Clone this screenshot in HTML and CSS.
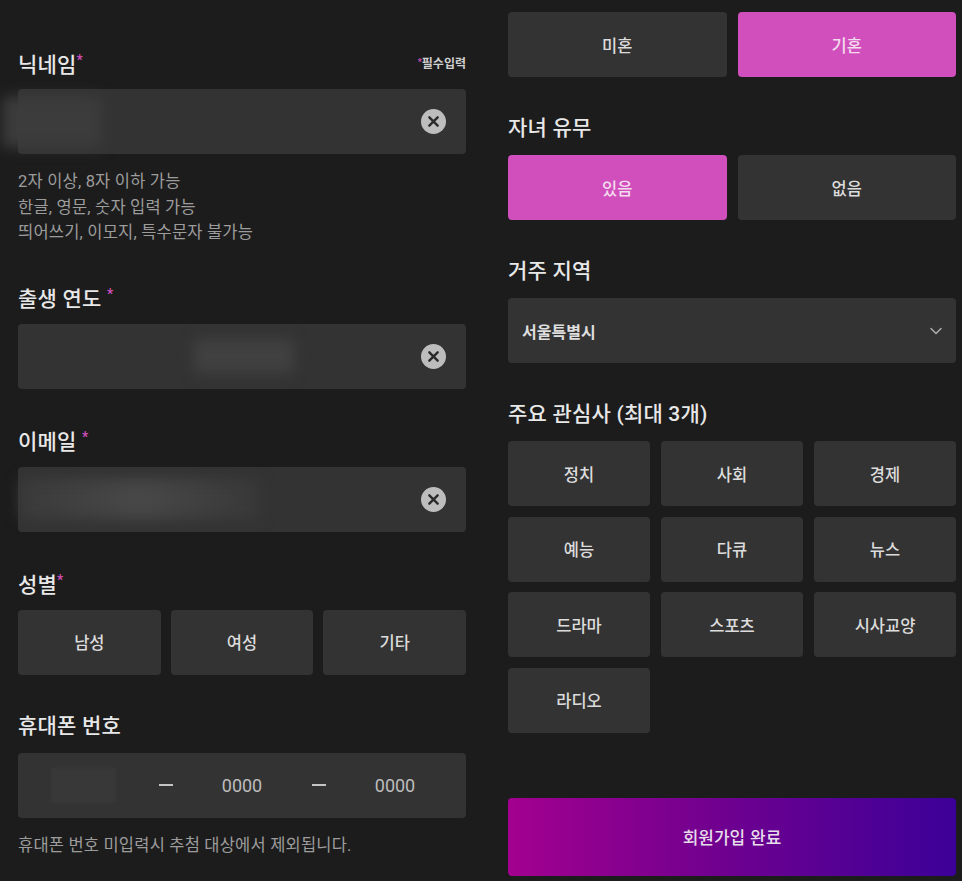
FILE: index.html
```html
<!DOCTYPE html>
<html lang="ko">
<head>
    <meta charset="UTF-8" />
    <meta name="viewport" content="width=device-width, initial-scale=1" />
    <title>회원가입</title>
    <link rel="stylesheet" href="styles.css">
</head>
<body>
    <div class="page">
        <div class="col col-left">
            <div class="field">
                <div class="label-row">
                    <span class="label">닉네임<span class="req">*</span></span>
                    <span class="note"><span class="req">*</span>필수입력</span>
                </div>
                <div class="input">
                    <span class="blur blur-nick"></span>
                    <span class="clear">
                        <svg width="25" height="25" viewBox="0 0 24 24"><circle cx="12" cy="12" r="12" fill="#bdbdbd"/><path d="M8 8 L16 16 M16 8 L8 16" stroke="#2b2b2b" stroke-width="2.3" stroke-linecap="round"/></svg>
                    </span>
                </div>
                <div class="hints">
                    <div>2자 이상, 8자 이하 가능</div>
                    <div>한글, 영문, 숫자 입력 가능</div>
                    <div>띄어쓰기, 이모지, 특수문자 불가능</div>
                </div>
            </div>

            <div class="field">
                <div class="label-row">
                    <span class="label">출생 연도 <span class="req">*</span></span>
                </div>
                <div class="input">
                    <span class="blur blur-year"></span>
                    <span class="clear">
                        <svg width="25" height="25" viewBox="0 0 24 24"><circle cx="12" cy="12" r="12" fill="#bdbdbd"/><path d="M8 8 L16 16 M16 8 L8 16" stroke="#2b2b2b" stroke-width="2.3" stroke-linecap="round"/></svg>
                    </span>
                </div>
            </div>

            <div class="field">
                <div class="label-row">
                    <span class="label">이메일 <span class="req">*</span></span>
                </div>
                <div class="input">
                    <span class="blur blur-mail"></span>
                    <span class="clear">
                        <svg width="25" height="25" viewBox="0 0 24 24"><circle cx="12" cy="12" r="12" fill="#bdbdbd"/><path d="M8 8 L16 16 M16 8 L8 16" stroke="#2b2b2b" stroke-width="2.3" stroke-linecap="round"/></svg>
                    </span>
                </div>
            </div>

            <div class="field">
                <div class="label-row">
                    <span class="label">성별<span class="req">*</span></span>
                </div>
                <div class="choices three">
                    <div class="choice">남성</div>
                    <div class="choice">여성</div>
                    <div class="choice">기타</div>
                </div>
            </div>

            <div class="field">
                <div class="label-row">
                    <span class="label">휴대폰 번호</span>
                </div>
                <div class="phone">
                    <div class="phone-part"><span class="blur blur-phone"></span></div>
                    <div class="dash"></div>
                    <div class="phone-part">0000</div>
                    <div class="dash"></div>
                    <div class="phone-part">0000</div>
                </div>
                <div class="hints">
                    <div>휴대폰 번호 미입력시 추첨 대상에서 제외됩니다.</div>
                </div>
            </div>
        </div>

        <div class="col col-right">
            <div class="choices two">
                <div class="choice">미혼</div>
                <div class="choice active">기혼</div>
            </div>

            <div class="field">
                <div class="label-row">
                    <span class="label">자녀 유무</span>
                </div>
                <div class="choices two">
                    <div class="choice active">있음</div>
                    <div class="choice">없음</div>
                </div>
            </div>

            <div class="field">
                <div class="label-row">
                    <span class="label">거주 지역</span>
                </div>
                <div class="select">
                    <span>서울특별시</span>
                    <svg width="14" height="14" viewBox="0 0 14 14"><path d="M2 4.5 L7 9.5 L12 4.5" fill="none" stroke="#a8a8a8" stroke-width="1.6" stroke-linecap="round" stroke-linejoin="round"/></svg>
                </div>
            </div>

            <div class="field">
                <div class="label-row">
                    <span class="label">주요 관심사 (최대 3개)</span>
                </div>
                <div class="tags">
                    <div class="choice">정치</div>
                    <div class="choice">사회</div>
                    <div class="choice">경제</div>
                    <div class="choice">예능</div>
                    <div class="choice">다큐</div>
                    <div class="choice">뉴스</div>
                    <div class="choice">드라마</div>
                    <div class="choice">스포츠</div>
                    <div class="choice">시사교양</div>
                    <div class="choice">라디오</div>
                </div>
            </div>

            <button class="submit">회원가입 완료</button>
        </div>
    </div>
</body>
</html>
```

FILE: styles.css
```css
body {
    margin: 0;
    padding: 0;
    background: #1c1c1c;
    font-family: Roboto, "Noto Sans CJK KR", sans-serif;
    color: #e6e6e6;
}
.page {
    display: flex;
    gap: 42px;
    padding: 0 6px 0 18px;
    overflow: hidden;
}
.col {
    width: 448px;
    flex-shrink: 0;
}
.col-left {
    padding-top: 47px;
}
.col-right {
    padding-top: 12px;
}
.field + .field,
.choices + .field {
    margin-top: 36px;
}
.label-row {
    display: flex;
    justify-content: space-between;
    align-items: center;
    height: 30px;
    margin-bottom: 12px;
}
.label {
    font-size: 21px;
    line-height: 30px;
    font-weight: 500;
    color: #e8e8e8;
    letter-spacing: 0.2px;
}
.req {
    color: #d14fbc;
    font-size: 14px;
    vertical-align: 7px;
}
.note {
    font-size: 12px;
    font-weight: 700;
    color: #cfcfcf;
}
.note .req {
    font-size: 9px;
    vertical-align: 3px;
}
.input {
    display: flex;
    align-items: center;
    height: 65px;
    background: #333;
    border-radius: 4px;
    padding-right: 20px;
}
.clear {
    margin-left: auto;
    display: flex;
}
/* blurred values (hidden personal data) */
.blur {
    display: block;
    background: #444;
    filter: blur(7px);
    border-radius: 4px;
}
.blur-nick {
    width: 100px;
    height: 52px;
    margin-left: -16px;
    background: #3c3c3c;
}
.blur-year {
    width: 100px;
    height: 34px;
    margin-left: 176px;
    background: #414141;
}
.blur-mail {
    width: 240px;
    height: 40px;
    margin-left: 2px;
    background: linear-gradient(90deg, #3a3a3a, #484848 50%, #383838);
}
.blur-phone {
    width: 65px;
    height: 35px;
    background: #383838;
    filter: blur(1px);
    border-radius: 0;
}
.hints {
    margin-top: 15px;
    font-size: 16.5px;
    letter-spacing: 0.2px;
    line-height: 25.5px;
    color: #9c9c9c;
}
.choices {
    display: grid;
    gap: 11px;
}
.choices.two {
    grid-template-columns: 1fr 1fr;
}
.choices.three {
    grid-template-columns: 1fr 1fr 1fr;
    gap: 10px;
}
.choice {
    height: 65px;
    display: flex;
    align-items: center;
    justify-content: center;
    background: #333;
    border-radius: 4px;
    font-size: 16.5px;
    font-weight: 500;
    color: #dcdcdc;
}
.choice.active {
    background: #d14fbc;
    color: #f4dcef;
}
.phone {
    display: grid;
    grid-template-columns: 1fr 11px 1fr 11px 1fr;
    align-items: center;
    height: 65px;
    background: #333;
    border-radius: 4px;
}
.phone-part {
    display: flex;
    justify-content: center;
    font-size: 18px;
    color: #bdbdbd;
}
.phone-part .blur {
    margin-right: 12px;
}
.dash {
    justify-self: center;
    width: 14px;
    height: 2px;
    background: #c4c4c4;
}
.select {
    display: flex;
    align-items: center;
    justify-content: space-between;
    height: 65px;
    background: #333;
    border-radius: 4px;
    padding: 0 13px 0 14px;
    font-size: 16px;
    font-weight: 700;
    color: #dedede;
}
.tags {
    display: grid;
    grid-template-columns: repeat(3, 1fr);
    column-gap: 11px;
    row-gap: 10.5px;
}
.submit {
    display: block;
    width: 100%;
    height: 78px;
    margin-top: 65px;
    border: none;
    border-radius: 4px;
    background: linear-gradient(90deg, #a3008f, #72008f 45%, #3c0098);
    font-family: "Noto Sans CJK KR", sans-serif;
    font-size: 17px;
    font-weight: 500;
    color: #e6dcea;
}
```
